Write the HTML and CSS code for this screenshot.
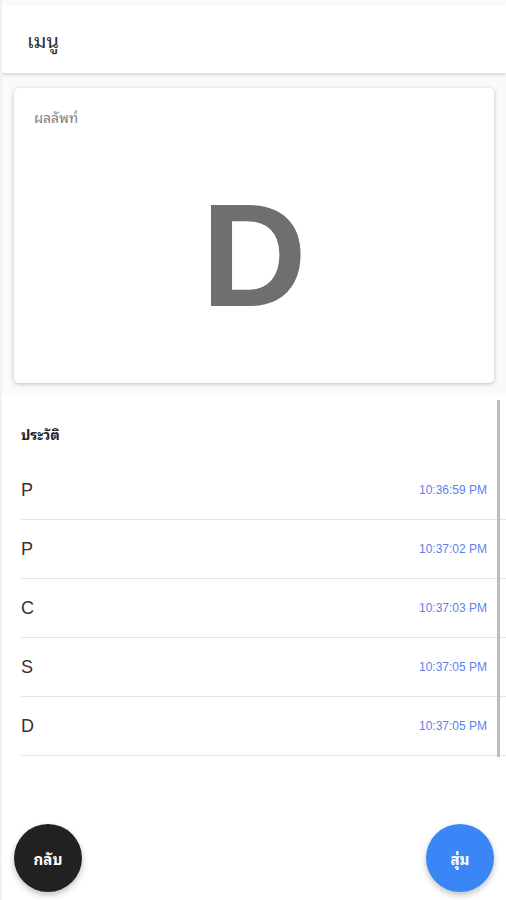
FILE: index.html
```html
<!DOCTYPE html>
<html lang="th">
<head>
    <meta charset="UTF-8">
    <meta name="viewport" content="width=device-width, initial-scale=1.0">
    <title>สุ่ม</title>
    <link rel="stylesheet" href="styles.css">
</head>
<body>
    <div class="page">
        <!-- Top bar -->
        <header class="app-bar">
            <span class="app-title">เมนู</span>
        </header>

        <!-- Current result -->
        <div class="result-wrap">
            <div class="result-card">
                <div class="result-label">ผลลัพท์</div>
                <div class="result-value">D</div>
            </div>
        </div>

        <!-- History list -->
        <section class="history">
            <div class="history-title">ประวัติ</div>
            <ul class="history-list">
                <li class="history-item"><span class="item-letter">P</span><span class="item-time">10:36:59 PM</span></li>
                <li class="history-item"><span class="item-letter">P</span><span class="item-time">10:37:02 PM</span></li>
                <li class="history-item"><span class="item-letter">C</span><span class="item-time">10:37:03 PM</span></li>
                <li class="history-item"><span class="item-letter">S</span><span class="item-time">10:37:05 PM</span></li>
                <li class="history-item"><span class="item-letter">D</span><span class="item-time">10:37:05 PM</span></li>
            </ul>
        </section>

        <!-- Floating buttons -->
        <button class="fab fab-back">กลับ</button>
        <button class="fab fab-random">สุ่ม</button>
    </div>
</body>
</html>
```

FILE: styles.css
```css
/* Page */
body {
    margin: 0;
    font-family: "Noto Sans Thai Looped", "Noto Sans Thai", "Liberation Sans", Arial, sans-serif;
    background: #f2f2f2;
}

.page {
    position: relative;
    height: 900px;
    margin-left: 2px;
    padding-top: 5px;
    box-sizing: border-box;
    background: #fafafa;
    overflow: hidden;
}

/* Header */
.app-bar {
    height: 68px;
    display: flex;
    align-items: center;
    padding-left: 25px;
    background: white;
    box-shadow: 0 2px 3px rgba(0,0,0,0.15);
    position: relative;
    z-index: 1;
}

.app-title {
    font-size: 20px;
    color: #333;
}

/* Result card */
.result-wrap {
    padding: 15px 12px 12px 12px;
}

.result-card {
    height: 295px;
    background: white;
    border-radius: 5px;
    box-shadow: 0 1px 4px rgba(0,0,0,0.25);
    padding: 17px 20px 0 20px;
    box-sizing: border-box;
}

.result-label {
    font-size: 14px;
    color: #808080;
}

.result-value {
    font-family: "Liberation Sans", Arial, sans-serif;
    font-weight: bold;
    font-size: 146px;
    line-height: 1;
    color: #6f6f6f;
    text-align: center;
    margin-top: 55px;
}

/* History */
.history {
    position: relative;
    background: white;
    height: 510px;
    padding: 27px 0 0 19px;
    box-sizing: border-box;
}

.history::after {
    content: "";
    position: absolute;
    right: 6px;
    top: 5px;
    width: 3px;
    height: 357px;
    background: #bdbdbd;
}

.history-title {
    font-size: 14px;
    font-weight: bold;
    color: #222;
    height: 39px;
}

.history-list {
    list-style: none;
    margin: 0;
    padding: 0;
}

.history-item {
    height: 58px;
    display: flex;
    align-items: center;
    justify-content: space-between;
    padding-right: 19px;
    border-bottom: 1px solid #e4e4e4;
}

.item-letter {
    font-family: "Liberation Sans", Arial, sans-serif;
    font-size: 18px;
    color: #333;
}

.item-time {
    font-family: "Liberation Sans", Arial, sans-serif;
    font-size: 12px;
    color: #5f7ff0;
}

/* Floating buttons */
.fab {
    position: absolute;
    bottom: 8px;
    width: 68px;
    height: 68px;
    border: none;
    border-radius: 50%;
    color: white;
    font-family: "Noto Sans Thai Looped", "Noto Sans Thai", "Liberation Sans", sans-serif;
    font-size: 15px;
    font-weight: bold;
    box-shadow: 0 3px 6px rgba(0,0,0,0.25);
    cursor: pointer;
}

.fab-back {
    left: 12px;
    background: #212121;
}

.fab-random {
    right: 12px;
    background: #3a86f7;
}
```
